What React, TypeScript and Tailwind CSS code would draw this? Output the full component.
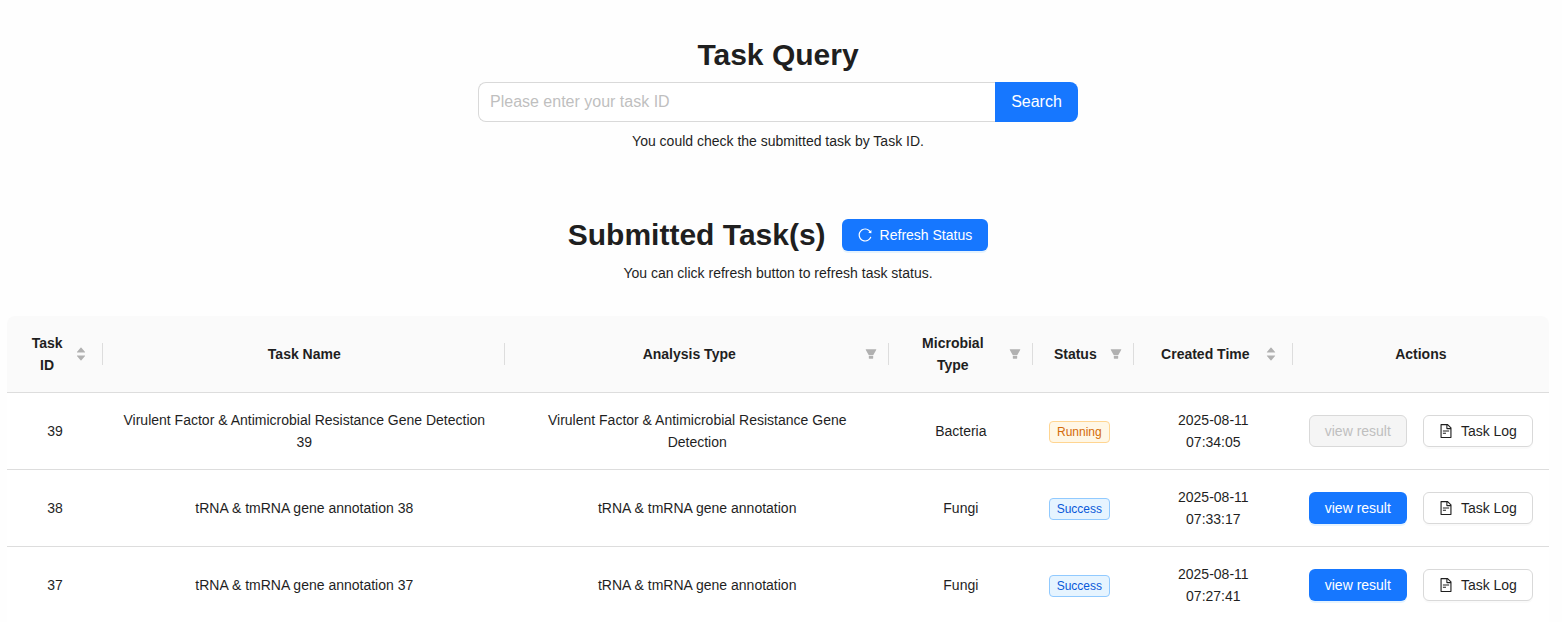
import type { ReactNode } from 'react';
import {
  AiFillFilter,
  AiFillCaretDown,
  AiFillCaretUp,
  AiOutlineFileText,
  AiOutlineReload,
} from 'react-icons/ai';

type Control = 'sort' | 'filter' | null;

interface Column {
  title: string;
  width: string;
  control: Control;
}

interface Task {
  id: number;
  name: string;
  type: string;
  microbe: string;
  status: 'Running' | 'Success';
  date: string;
  time: string;
}

// Trims the empty margin round the glyphs so that they fill their box.
const TIGHT_VIEW_BOX = '64 64 896 896';

const columns: Column[] = [
  { title: 'Task ID', width: 'w-[96.2px]', control: 'sort' },
  { title: 'Task Name', width: 'w-[402.25px]', control: null },
  { title: 'Analysis Type', width: 'w-[383.55px]', control: 'filter' },
  { title: 'Microbial Type', width: 'w-[143.7px]', control: 'filter' },
  { title: 'Status', width: 'w-[101.3px]', control: 'filter' },
  { title: 'Created Time', width: 'w-[158.7px]', control: 'sort' },
  { title: 'Actions', width: 'w-[256.3px]', control: null },
];

const tasks: Task[] = [
  {
    id: 39,
    name: 'Virulent Factor & Antimicrobial Resistance Gene Detection 39',
    type: 'Virulent Factor & Antimicrobial Resistance Gene Detection',
    microbe: 'Bacteria',
    status: 'Running',
    date: '2025-08-11',
    time: '07:34:05',
  },
  {
    id: 38,
    name: 'tRNA & tmRNA gene annotation 38',
    type: 'tRNA & tmRNA gene annotation',
    microbe: 'Fungi',
    status: 'Success',
    date: '2025-08-11',
    time: '07:33:17',
  },
  {
    id: 37,
    name: 'tRNA & tmRNA gene annotation 37',
    type: 'tRNA & tmRNA gene annotation',
    microbe: 'Fungi',
    status: 'Success',
    date: '2025-08-11',
    time: '07:27:41',
  },
];

function HeaderCell({ column, last }: { column: Column; last: boolean }) {
  return (
    <th className="h-[77px] border-b border-[#dddddd] p-0 font-bold">
      <div className="flex items-center">
        <div className="flex flex-1 items-center pr-[15px] pl-4">
          <span className="flex-1 text-center">{column.title}</span>
          {column.control === 'sort' && (
            <span className="ml-1 flex w-3 flex-col items-center text-[#b1b1b1]">
              <AiFillCaretUp className="size-3" />
              <AiFillCaretDown className="-mt-[3.6px] size-3" />
            </span>
          )}
          {column.control === 'filter' && (
            <AiFillFilter
              viewBox={TIGHT_VIEW_BOX}
              className="-mr-1 ml-2 size-3 shrink-0 text-[#b1b1b1]"
            />
          )}
        </div>
        <span className={last ? 'h-[22px] w-px' : 'h-[22px] w-px bg-[#dddddd]'} />
      </div>
    </th>
  );
}

function Cell({ children }: { children: ReactNode }) {
  return (
    <td className="h-[77px] border-b border-[#dddddd] px-4 py-0 text-center align-middle">
      {children}
    </td>
  );
}

function StatusTag({ status }: { status: Task['status'] }) {
  const tone =
    status === 'Running'
      ? 'border-[#ffd591] bg-[#fff7e6] text-[#d46b08]'
      : 'border-[#91caff] bg-[#e6f4ff] text-[#0958d9]';
  return (
    <span
      className={`mt-0.5 mr-2 inline-flex h-[22px] items-center rounded-sm border px-[7px] text-xs leading-5 ${tone}`}
    >
      {status}
    </span>
  );
}

function TaskRow({ task }: { task: Task }) {
  const running = task.status === 'Running';
  return (
    <tr>
      <Cell>{task.id}</Cell>
      <Cell>{task.name}</Cell>
      <Cell>{task.type}</Cell>
      <Cell>{task.microbe}</Cell>
      <td className="h-[77px] border-b border-[#dddddd] p-0">
        <div className="flex justify-center">
          <StatusTag status={task.status} />
        </div>
      </td>
      <Cell>
        {task.date}
        <br />
        {task.time}
      </Cell>
      <td className="h-[77px] border-b border-[#dddddd] p-0">
        <div className="flex justify-center gap-4">
          <button
            disabled={running}
            className={
              running
                ? 'h-8 rounded-md border border-[#d9d9d9] bg-[#f5f5f5] px-[15px] text-[#bfbfbf]'
                : 'h-8 rounded-md bg-[#1677ff] px-4 text-white shadow-[0_2px_0_rgba(5,145,255,0.1)]'
            }
          >
            view result
          </button>
          <button className="flex h-8 items-center justify-center gap-2 rounded-md border border-[#d9d9d9] bg-white px-[15px] shadow-[0_2px_0_rgba(0,0,0,0.02)]">
            <AiOutlineFileText viewBox={TIGHT_VIEW_BOX} className="size-3.5" />
            <span>Task Log</span>
          </button>
        </div>
      </td>
    </tr>
  );
}

export default function App() {
  return (
    <div className="h-[622px] overflow-hidden bg-[#fefefe] font-['Liberation_Sans',Arial,sans-serif] text-sm leading-[22px] text-[#1f1f1f]">
      <div className="flex w-[1556px] flex-col items-center px-[7px]">
        <h1 className="mt-[35px] text-[30px] leading-10 font-bold">Task Query</h1>
        <div className="mt-[7px] flex h-10 w-[600px]">
          <input
            placeholder="Please enter your task ID"
            className="w-[517px] rounded-l-lg border border-r-0 border-[#d9d9d9] bg-white px-[11px] text-base outline-none placeholder:text-[#bfbfbf]"
          />
          <button className="w-[83px] rounded-r-lg bg-[#1677ff] text-base text-white">Search</button>
        </div>
        <p className="mt-2">You could check the submitted task by Task ID.</p>

        <div className="mt-[63px] flex items-center gap-4">
          <h1 className="text-[30px] leading-10 font-bold">Submitted Task(s)</h1>
          <button className="flex h-8 items-center justify-center gap-2 rounded-md bg-[#1677ff] px-4 text-white shadow-[0_2px_0_rgba(5,145,255,0.1)]">
            <AiOutlineReload viewBox={TIGHT_VIEW_BOX} className="size-3.5" />
            <span>Refresh Status</span>
          </button>
        </div>
        <p className="mt-[7px]">You can click refresh button to refresh task status.</p>

        <table className="mt-8 w-[1542px] table-fixed border-separate border-spacing-0 overflow-hidden rounded-t-lg bg-white">
          <colgroup>
            {columns.map((column) => (
              <col key={column.title} className={column.width} />
            ))}
          </colgroup>
          <thead className="bg-[#fafafa]">
            <tr>
              {columns.map((column, index) => (
                <HeaderCell
                  key={column.title}
                  column={column}
                  last={index === columns.length - 1}
                />
              ))}
            </tr>
          </thead>
          <tbody>
            {tasks.map((task) => (
              <TaskRow key={task.id} task={task} />
            ))}
          </tbody>
        </table>
      </div>
    </div>
  );
}
